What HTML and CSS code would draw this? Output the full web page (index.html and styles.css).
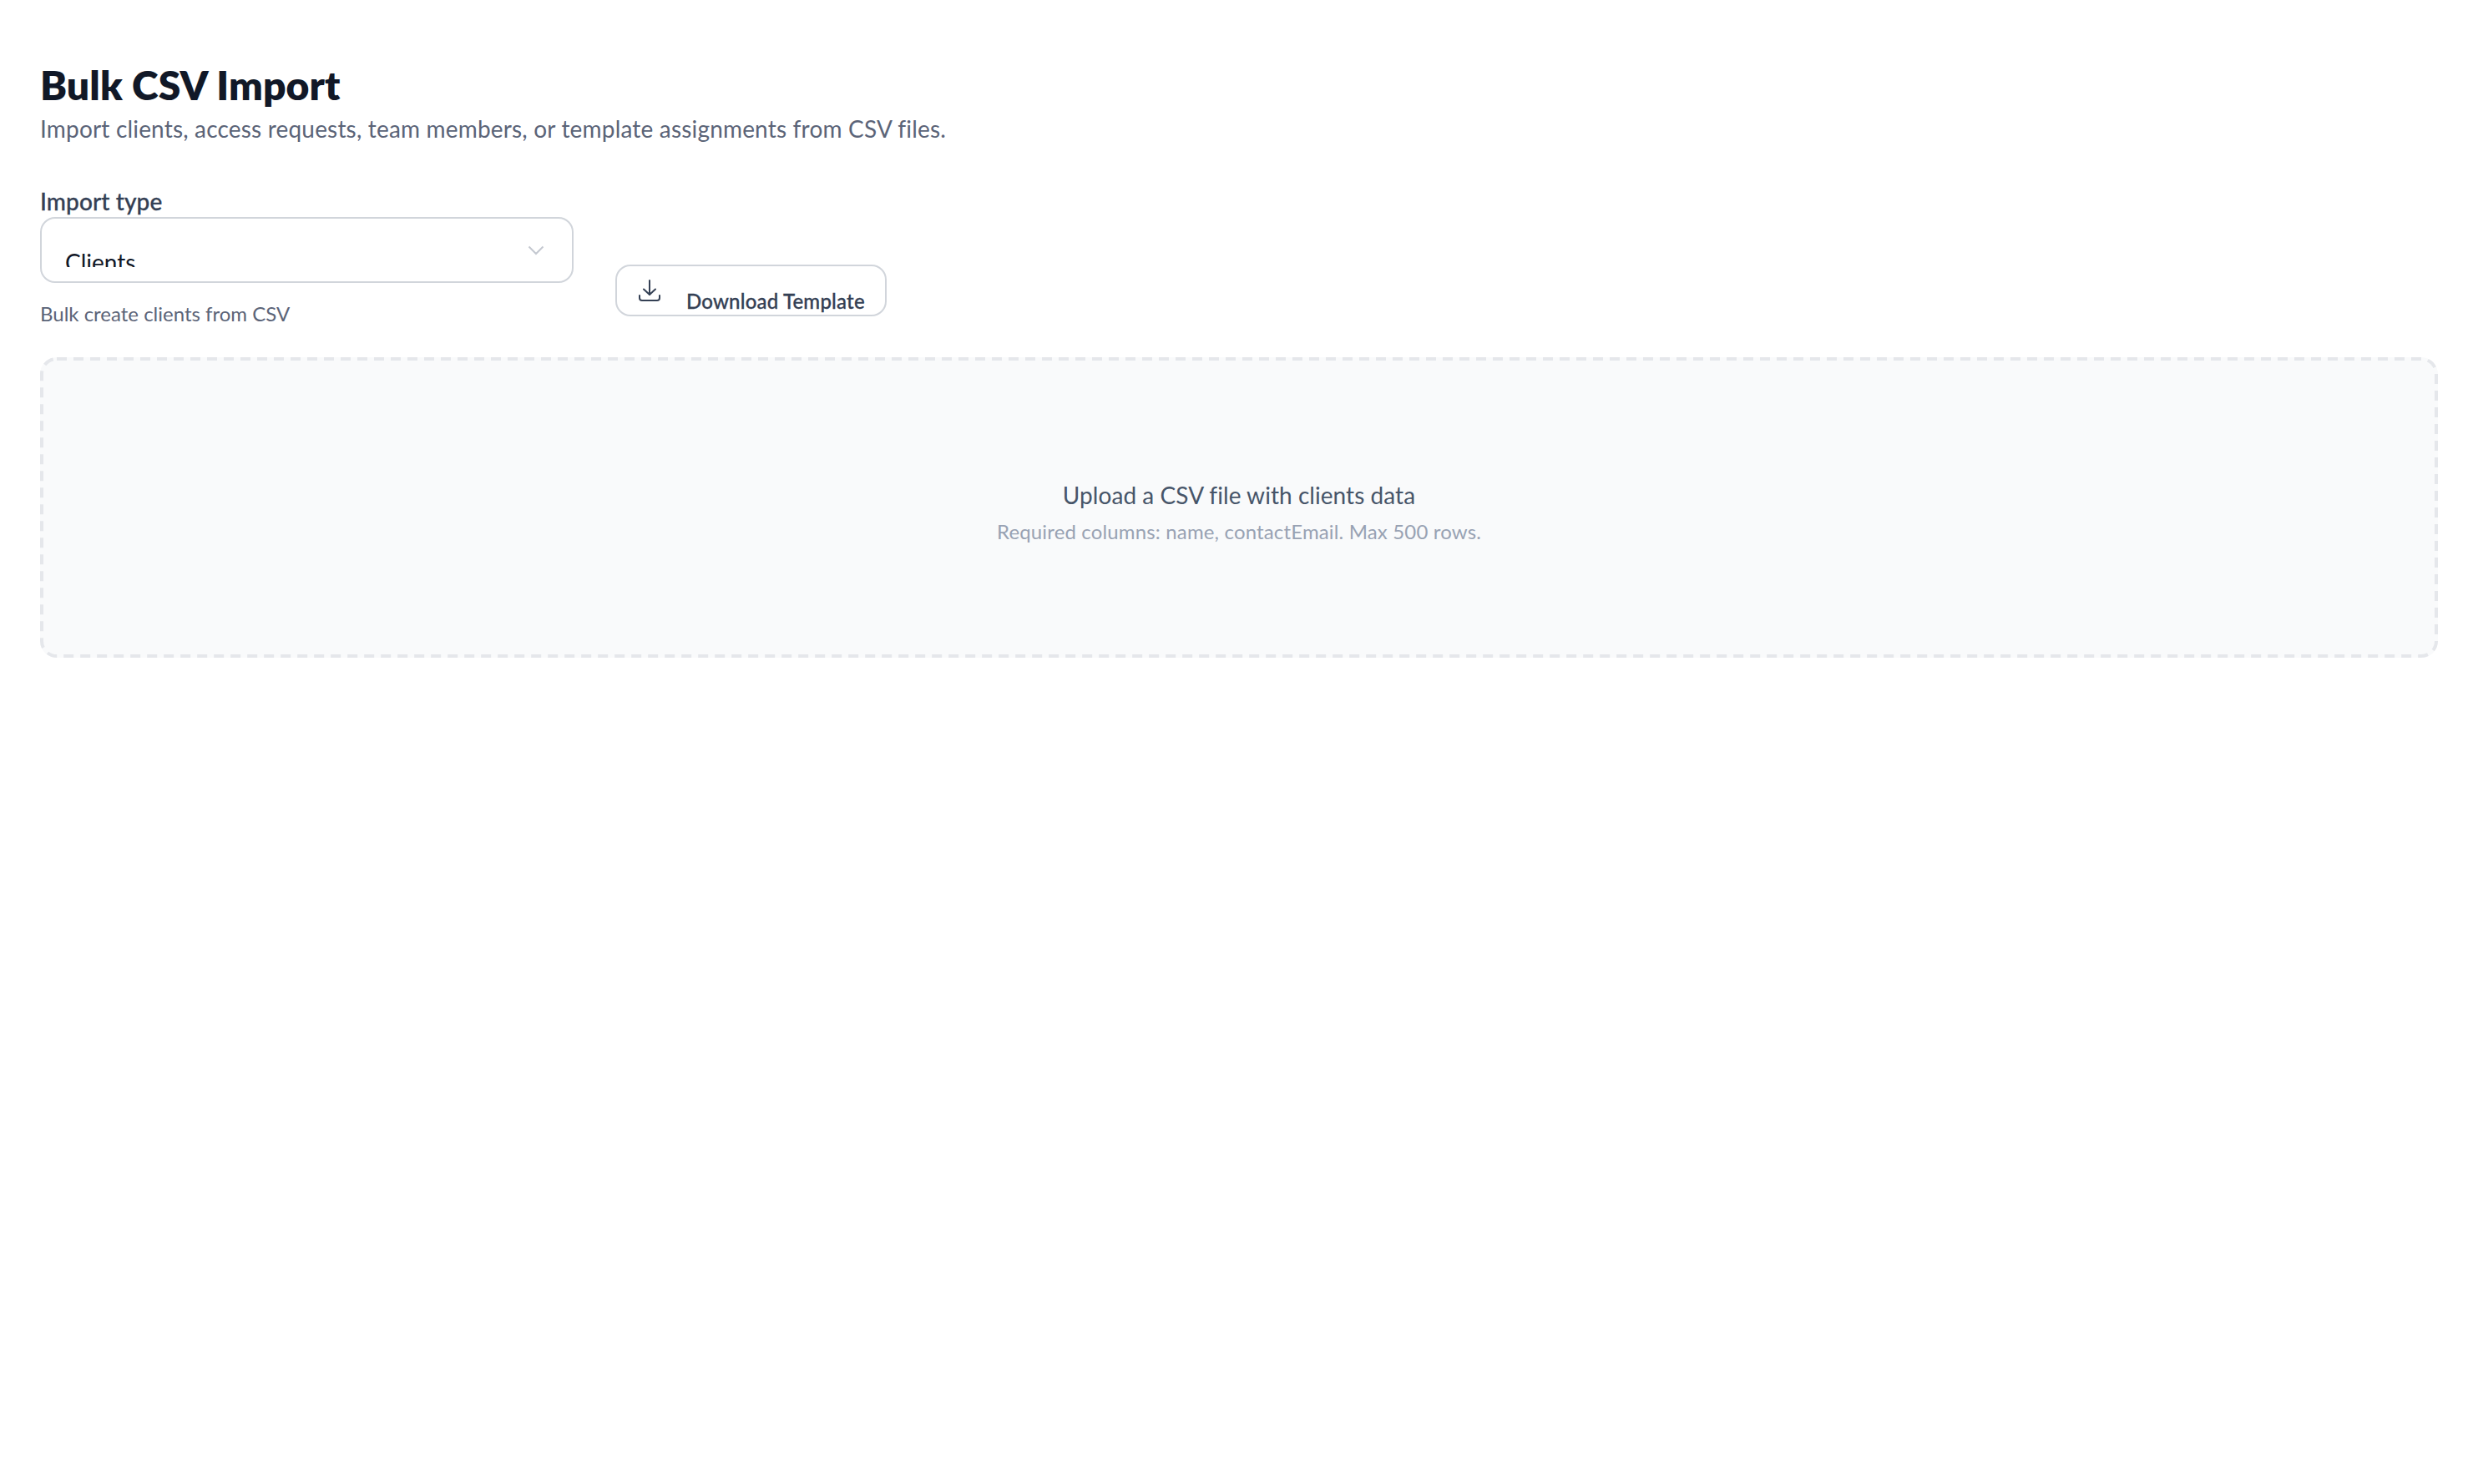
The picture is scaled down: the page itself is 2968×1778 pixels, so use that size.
FILE: index.html
```html
<!DOCTYPE html>
<html>
<head>
    <title>Bulk CSV Import</title>
    <link rel="stylesheet" href="styles.css">
</head>
<body>
    <h1>Bulk CSV Import</h1>
    <p class="subtitle">Import clients, access requests, team members, or template assignments from CSV files.</p>

    <div class="import-row">
        <div class="type-field">
            <div class="type-label">Import type</div>
            <div class="select-box">
                <span class="select-value">Clients</span>
                <svg class="chevron" width="20" height="12" viewBox="0 0 20 12" fill="none">
                    <path d="M1.5 1.5L10 10L18.5 1.5" stroke="#c4c8d0" stroke-width="2"/>
                </svg>
            </div>
            <div class="type-help">Bulk create clients from CSV</div>
        </div>
        <button class="download-btn">
            <svg width="26" height="26" viewBox="0 0 26 26" fill="none" stroke="#344054" stroke-width="2" stroke-linecap="round" stroke-linejoin="round">
                <path d="M13 1V18"/>
                <path d="M6 11.5L13 18L20 11.5"/>
                <path d="M1 19V22Q1 25 4 25H22Q25 25 25 22V19"/>
            </svg>
            <span>Download Template</span>
        </button>
    </div>

    <div class="upload-zone">
        <svg class="upload-border" width="2872" height="360" viewBox="0 0 2872 360" fill="none">
            <rect x="2" y="2" width="2868" height="356" rx="18" stroke="#e5e7eb" stroke-width="4" stroke-dasharray="12 8"/>
        </svg>
        <div class="upload-title">Upload a CSV file with clients data</div>
        <div class="upload-hint">Required columns: name, contactEmail. Max 500 rows.</div>
    </div>
</body>
</html>
```

FILE: styles.css
```css
body {
    font-family: Lato, "Noto Sans", sans-serif;
    background-color: #fff;
    margin: 0;
    padding: 74px 48px 0;
}

h1 {
    font-size: 48px;
    line-height: 56px;
    font-weight: 800;
    letter-spacing: 0.12px;
    color: #111827;
    margin: 0;
}

.subtitle {
    font-size: 28px;
    line-height: 40px;
    letter-spacing: 0.18px;
    color: #5b6478;
    margin: 4px 0 0;
}

.import-row {
    display: flex;
    align-items: flex-end;
    gap: 50px;
    margin-top: 49px;
}

.type-field {
    width: 639px;
}

.type-label {
    font-size: 28px;
    line-height: 36px;
    font-weight: 500;
    letter-spacing: 0.1px;
    -webkit-text-stroke: 0.3px #344054;
    color: #344054;
    margin-bottom: 1px;
}

.select-box {
    display: flex;
    justify-content: space-between;
    align-items: center;
    box-sizing: border-box;
    height: 79px;
    padding: 0 33px 0 28px;
    background-color: #fff;
    border: 2px solid #d1d5db;
    border-radius: 18px;
}

.select-value {
    align-self: flex-start;
    display: block;
    height: 30px;
    margin-top: 28px;
    overflow: hidden;
    font-size: 28px;
    line-height: 48px;
    color: #111827;
}

.type-help {
    font-size: 24px;
    line-height: 32px;
    color: #5b6478;
    margin-top: 21px;
}

.download-btn {
    display: flex;
    align-items: flex-start;
    gap: 31px;
    box-sizing: border-box;
    width: 325px;
    height: 62px;
    margin-bottom: 13px;
    padding: 16px 0 0 26px;
    font-family: inherit;
    font-size: 24px;
    line-height: 32px;
    font-weight: 500;
    letter-spacing: 0.2px;
    -webkit-text-stroke: 0.3px #344054;
    color: #344054;
    background-color: #fff;
    border: 2px solid #d1d5db;
    border-radius: 18px;
}

.download-btn svg {
    -webkit-text-stroke: 0;
}

.download-btn span {
    margin-top: 10px;
}

.upload-zone {
    position: relative;
    display: flex;
    flex-direction: column;
    align-items: center;
    justify-content: center;
    gap: 8px;
    box-sizing: border-box;
    height: 360px;
    margin-top: 36px;
    padding-top: 10px;
    background-color: #f9fafb;
    border-radius: 20px;
}

.upload-border {
    position: absolute;
    top: 0;
    left: 0;
}

.upload-title {
    font-size: 28px;
    line-height: 40px;
    letter-spacing: 0.05px;
    color: #475569;
}

.upload-hint {
    font-size: 24px;
    line-height: 32px;
    letter-spacing: 0.15px;
    color: #98a2b3;
}
```
